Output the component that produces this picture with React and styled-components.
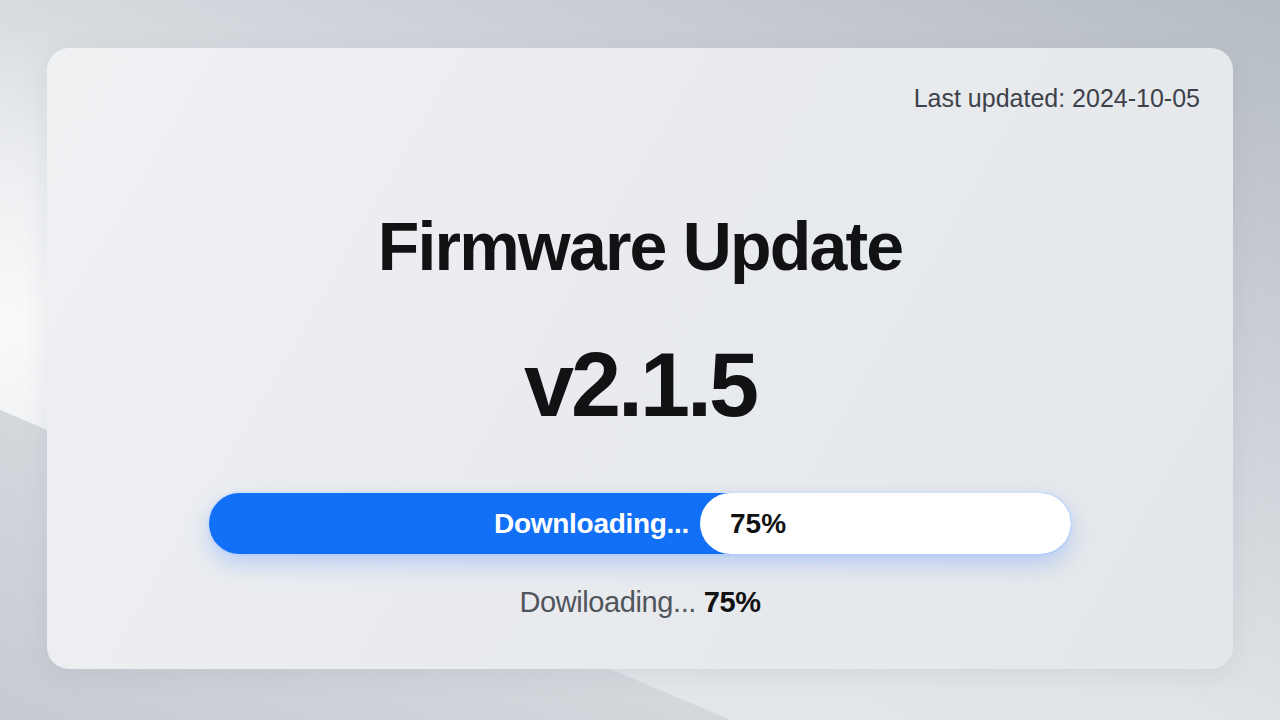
import React from "react";
import styled, { createGlobalStyle } from "styled-components";

const GlobalStyle = createGlobalStyle`
  html, body {
    margin: 0;
    padding: 0;
  }
  body {
    font-family: "Liberation Sans", Arial, sans-serif;
  }
`;

const update = {
  lastUpdated: "2024-10-05",
  version: "v2.1.5",
  progress: 75,
};

function App() {
  return (
    <>
      <GlobalStyle />
      <Page>
        <Card>
          <Header>
            <LastUpdated>Last updated: {update.lastUpdated}</LastUpdated>
          </Header>
          <Main>
            <Title>Firmware Update</Title>
            <Version>{update.version}</Version>
            <Track>
              <Fill>Downloading...</Fill>
              <Remaining>{update.progress}%</Remaining>
            </Track>
            <Status>
              Dowiloading... <strong>{update.progress}%</strong>
            </Status>
          </Main>
        </Card>
      </Page>
    </>
  );
}
export default App;

const Page = styled.div`
  box-sizing: border-box;
  width: 1280px;
  height: 720px;
  padding: 48px 47px 51px;
  overflow: hidden;
  background:
    linear-gradient(23deg, #c6cbd2 0%, #d4d8dd 24.5%, rgba(255, 255, 255, 0) 24.6%),
    radial-gradient(ellipse 320px 300px at 0% 45%, rgba(255, 255, 255, 0.8), rgba(255, 255, 255, 0) 100%),
    linear-gradient(205deg, #b6bcc4 0%, #cdd1d7 30%, #e1e4e8 58%, #e6e9ec 100%);
`;

const Card = styled.div`
  box-sizing: border-box;
  height: 100%;
  display: flex;
  flex-direction: column;
  padding: 36px 33px 0;
  border-radius: 22px;
  background: linear-gradient(120deg, #eff1f3 0%, #e9ebee 45%, #e4e7ea 100%);
  box-shadow: 0 6px 24px rgba(90, 100, 115, 0.1);
`;

const Header = styled.div`
  display: flex;
  justify-content: flex-end;
`;

const LastUpdated = styled.span`
  font-size: 25px;
  line-height: 28px;
  color: #3d424a;
`;

const Main = styled.div`
  display: flex;
  flex-direction: column;
  align-items: center;
`;

const Title = styled.h1`
  margin: 99px 0 0;
  font-size: 68px;
  line-height: 70px;
  font-weight: 700;
  letter-spacing: -1.8px;
  color: #111214;
`;

const Version = styled.div`
  margin-top: 58px;
  font-size: 90px;
  line-height: 92px;
  font-weight: 700;
  letter-spacing: -3px;
  color: #111214;
`;

const Track = styled.div`
  margin-top: 62px;
  width: 862px;
  height: 61px;
  display: flex;
  border-radius: 31px;
  background: #1170f5;
  box-shadow: 0 10px 22px rgba(70, 135, 255, 0.3),
    0 0 0 2px rgba(210, 225, 255, 0.6);
`;

const Fill = styled.div`
  flex: 1;
  display: flex;
  align-items: center;
  justify-content: flex-end;
  padding-right: 11px;
  font-size: 28px;
  font-weight: 700;
  letter-spacing: -0.3px;
  color: #ffffff;
`;

const Remaining = styled.div`
  box-sizing: border-box;
  width: 371px;
  display: flex;
  align-items: center;
  padding-left: 30px;
  border-radius: 31px;
  background: #ffffff;
  font-size: 28px;
  font-weight: 700;
  color: #111214;
`;

const Status = styled.div`
  margin-top: 31px;
  font-size: 29px;
  line-height: 34px;
  letter-spacing: -0.4px;
  color: #50555c;

  strong {
    color: #111214;
    font-weight: 700;
  }
`;
